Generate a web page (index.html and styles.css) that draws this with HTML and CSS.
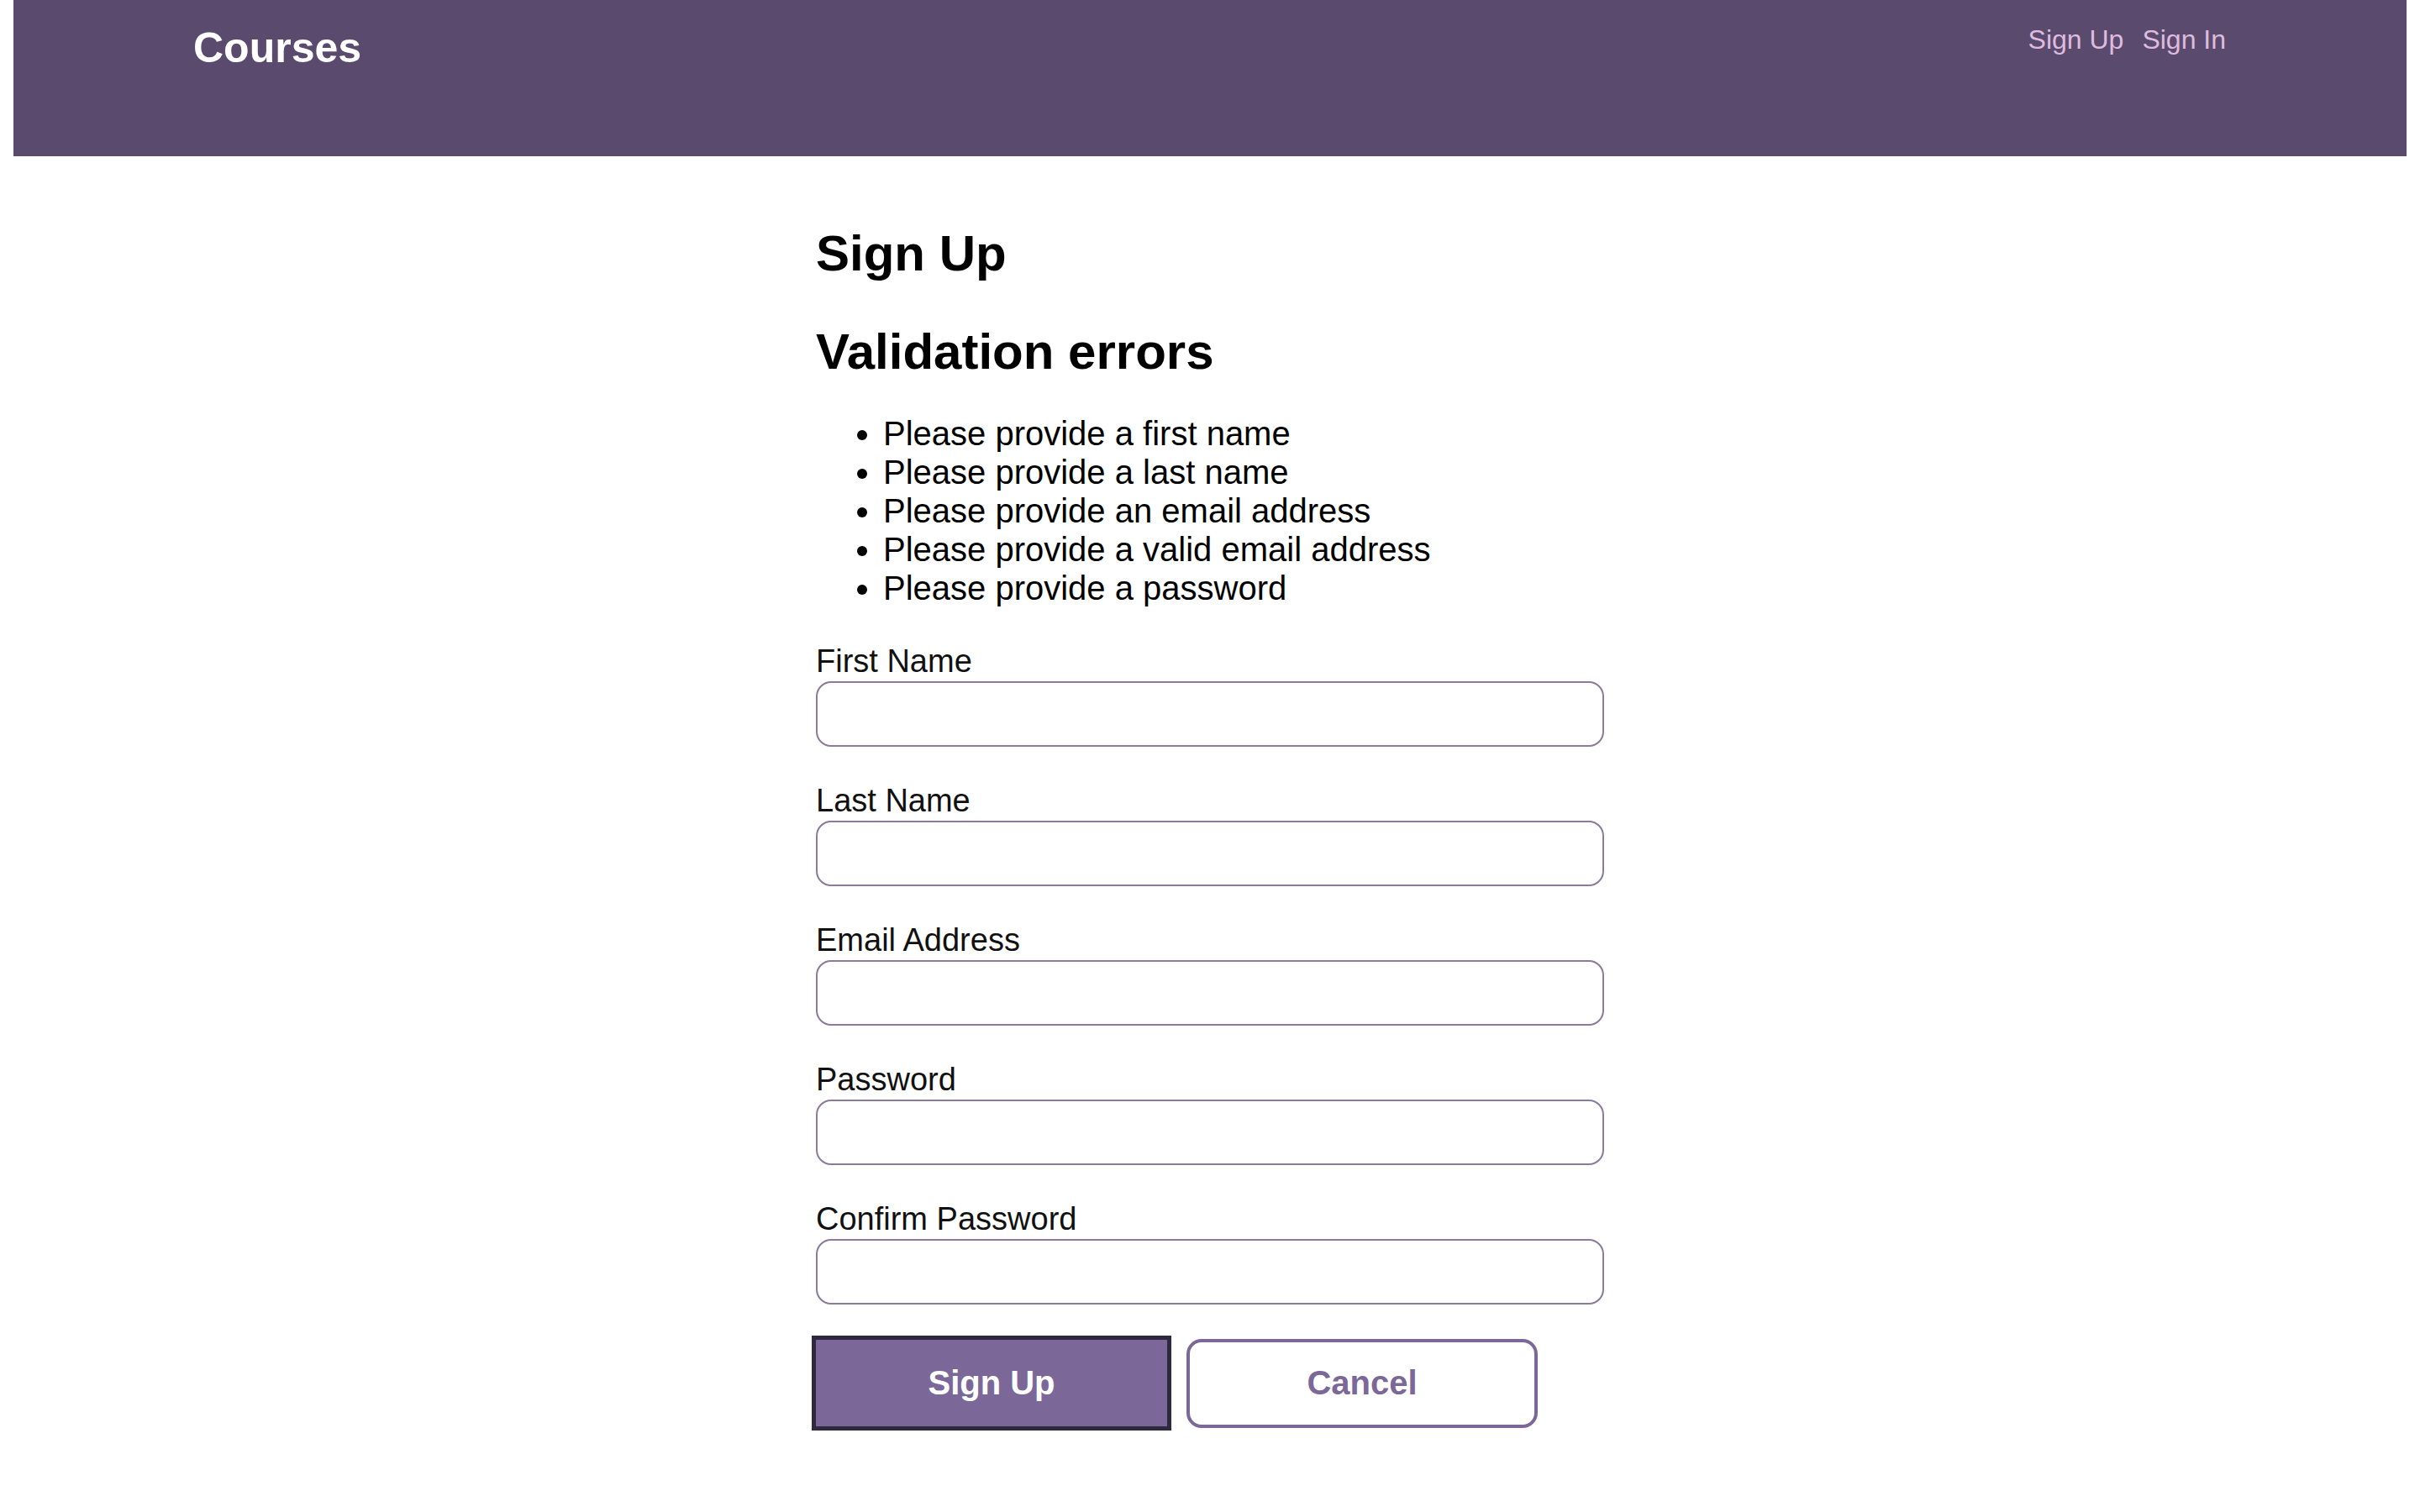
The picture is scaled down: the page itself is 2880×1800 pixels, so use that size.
FILE: index.html
```html
<!DOCTYPE html>
<html lang="en">
<head>
<meta charset="utf-8">
<title>Courses - Sign Up</title>
<link rel="stylesheet" href="styles.css">
</head>
<body>
<header class="site-header">
  <div class="brand">Courses</div>
  <nav class="auth-nav">
    <a class="auth-link" href="#">Sign Up</a>
    <a class="auth-link" href="#">Sign In</a>
  </nav>
</header>
<main class="form-wrap">
  <h2 class="page-title">Sign Up</h2>
  <h2 class="errors-title">Validation errors</h2>
  <ul class="error-list">
    <li>Please provide a first name</li>
    <li>Please provide a last name</li>
    <li>Please provide an email address</li>
    <li>Please provide a valid email address</li>
    <li>Please provide a password</li>
  </ul>
  <form class="signup-form">
    <div class="field">
      <label class="field-label" for="firstName">First Name</label>
      <input class="field-input" id="firstName" type="text">
    </div>
    <div class="field">
      <label class="field-label" for="lastName">Last Name</label>
      <input class="field-input" id="lastName" type="text">
    </div>
    <div class="field">
      <label class="field-label" for="email">Email Address</label>
      <input class="field-input" id="email" type="text">
    </div>
    <div class="field">
      <label class="field-label" for="password">Password</label>
      <input class="field-input" id="password" type="password">
    </div>
    <div class="field">
      <label class="field-label" for="confirm">Confirm Password</label>
      <input class="field-input" id="confirm" type="password">
    </div>
    <div class="actions">
      <button class="btn btn-primary" type="button">Sign Up</button>
      <button class="btn btn-secondary" type="button">Cancel</button>
    </div>
  </form>
</main>
</body>
</html>
```
FILE: styles.css
```css
html, body {
  background: #ffffff;
}
body {
  margin: 0 16px;
  padding-bottom: 60px;
  font-family: "Liberation Sans", Arial, Helvetica, sans-serif;
  color: #000;
}
.site-header {
  height: 186px;
  box-sizing: border-box;
  background: #5a4b6e;
  padding: 28px 215px 0 214px;
  display: flex;
  justify-content: space-between;
  align-items: flex-start;
}
.brand {
  color: #ffffff;
  font-weight: bold;
  font-size: 50px;
  line-height: 58px;
}
.auth-nav {
  display: flex;
  gap: 22px;
  padding-top: 1px;
}
.auth-link {
  color: #dfbbde;
  text-decoration: none;
  font-size: 32px;
  line-height: 37px;
}
.form-wrap {
  width: 938px;
  margin: 0 auto;
  padding-top: 83px;
}
.page-title,
.errors-title {
  font-size: 60px;
  line-height: 66px;
  font-weight: bold;
  margin: 0;
}
.errors-title {
  margin-top: 51px;
}
.error-list {
  margin: 41px 0 0 0;
  padding-left: 80px;
  font-size: 40px;
  line-height: 46px;
}
.signup-form {
  margin-top: 42px;
}
.field {
  display: flex;
  flex-direction: column;
  margin-bottom: 42px;
}
.field-label {
  font-size: 38px;
  line-height: 44px;
  margin-bottom: 2px;
  color: #111;
}
.field-input {
  box-sizing: border-box;
  width: 100%;
  height: 78px;
  border: 2px solid #8a7a9e;
  border-radius: 18px;
  background: #fff;
  font-size: 36px;
  padding: 0 20px;
  outline: none;
}
.actions {
  display: flex;
  align-items: center;
  gap: 18px;
  margin-top: -5px;
}
.btn {
  box-sizing: border-box;
  font-family: "Liberation Sans", Arial, Helvetica, sans-serif;
  font-size: 40px;
  font-weight: bold;
  cursor: pointer;
}
.btn-primary {
  width: 428px;
  height: 113px;
  margin-left: -5px;
  background: #7b6899;
  color: #ffffff;
  border: 5px solid #2f2940;
}
.btn-secondary {
  width: 418px;
  height: 106px;
  background: #ffffff;
  color: #7b6899;
  border: 4px solid #7b6899;
  border-radius: 18px;
}
```
